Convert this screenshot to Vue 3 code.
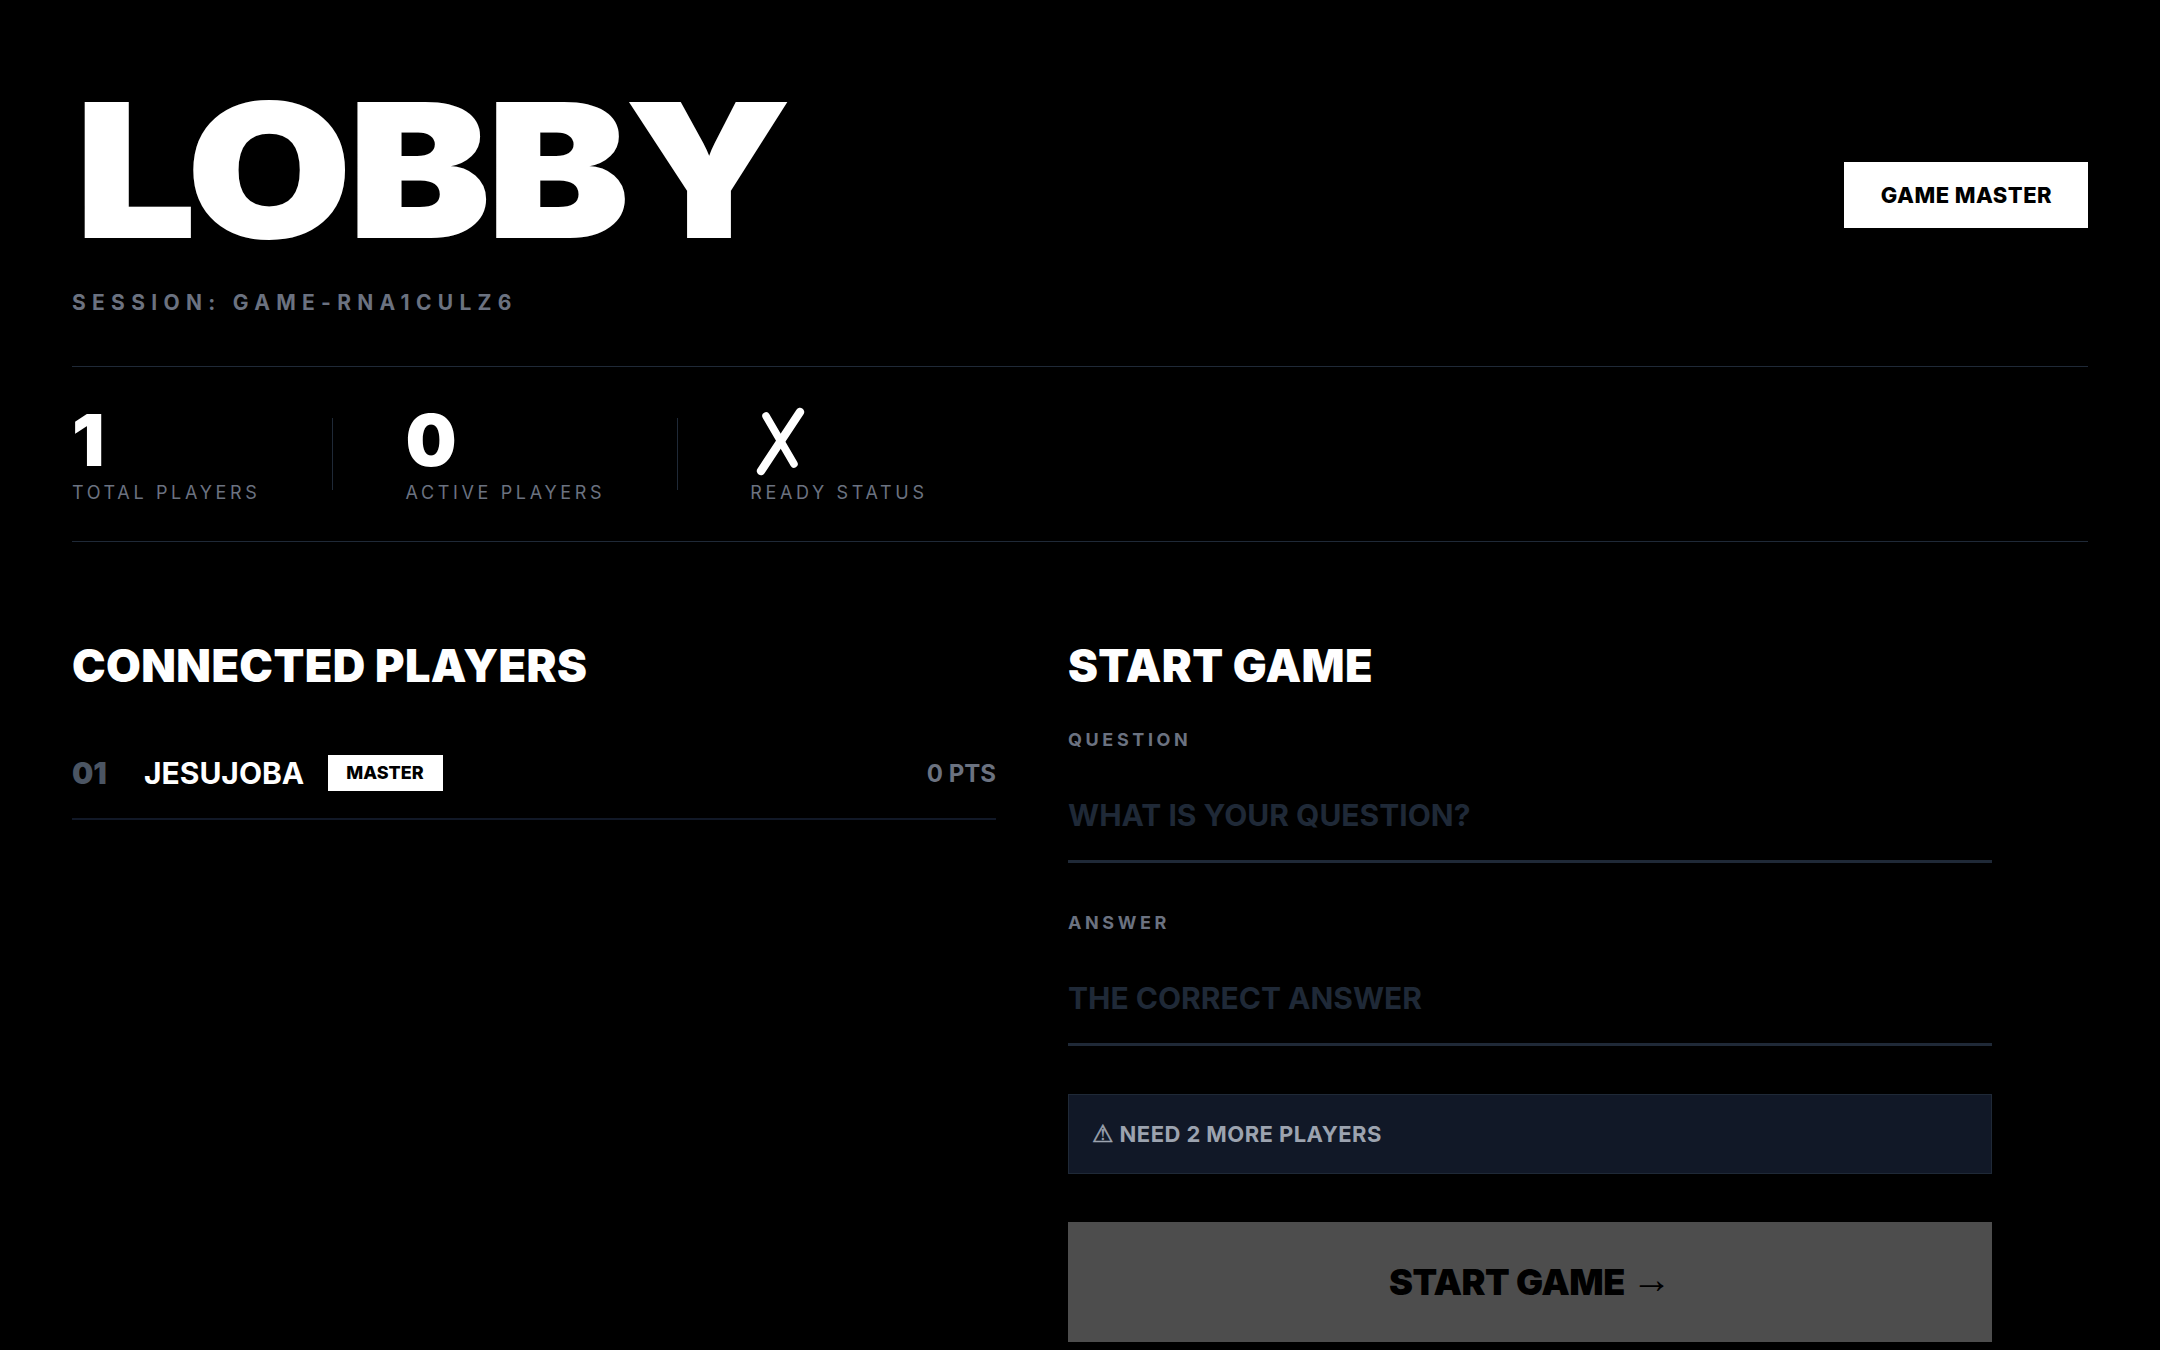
<script setup>
const stats = [
  { value: '1', label: 'TOTAL PLAYERS' },
  { value: '0', label: 'ACTIVE PLAYERS' },
  { icon: true, label: 'READY STATUS' },
]
const players = [{ id: 1, num: '01', name: 'JESUJOBA', master: true, pts: '0 PTS' }]
</script>

<template>
  <div class="page">
    <header class="header">
      <div>
        <h1 class="title">LOBBY</h1>
        <p class="session">SESSION: GAME-RNA1CULZ6</p>
      </div>
      <div class="role">GAME MASTER</div>
    </header>

    <section class="stats">
      <template v-for="(stat, index) in stats" :key="stat.label">
        <div v-if="index > 0" class="divider"></div>
        <div class="stat">
          <div class="stat__value">
            <svg v-if="stat.icon" class="cross" width="60" height="72" viewBox="0 0 60 72" aria-label="Not ready">
              <path d="M16 12 L44 60" fill="none" stroke="#fff" stroke-width="7.5" stroke-linecap="round" />
              <path d="M50 8 L11 67" fill="none" stroke="#fff" stroke-width="8.5" stroke-linecap="round" />
            </svg>
            <template v-else>{{ stat.value }}</template>
          </div>
          <div class="stat__label">{{ stat.label }}</div>
        </div>
      </template>
    </section>

    <main class="columns">
      <section>
        <h2 class="heading">CONNECTED PLAYERS</h2>
        <div class="player" v-for="player in players" :key="player.id">
          <span class="player__num">{{ player.num }}</span>
          <span class="player__name">{{ player.name }}</span>
          <span v-if="player.master" class="badge">MASTER</span>
          <span class="player__pts">{{ player.pts }}</span>
        </div>
      </section>

      <section>
        <h2 class="heading">START GAME</h2>
        <form class="form" @submit.prevent>
          <label class="field">
            <span class="field__label">QUESTION</span>
            <input class="field__input" type="text" placeholder="WHAT IS YOUR QUESTION?" />
          </label>
          <label class="field">
            <span class="field__label">ANSWER</span>
            <input class="field__input" type="text" placeholder="THE CORRECT ANSWER" />
          </label>
          <div class="alert"><span class="alert__icon">⚠</span> NEED 2 MORE PLAYERS</div>
          <button class="start" disabled>START GAME <span class="start__arrow">→</span></button>
        </form>
      </section>
    </main>
  </div>
</template>

<style>
html,
body {
  background: #000;
}
</style>

<style scoped>
.page {
  padding: 72px 72px 0;
  font-family: Inter, "Liberation Sans", sans-serif;
  color: #fff;
}

.header {
  display: flex;
  justify-content: space-between;
  align-items: center;
  padding-bottom: 49px;
  border-bottom: 1px solid #1f2937;
}

.title {
  margin: 0 0 0 4px;
  font-size: 184px;
  font-weight: 900;
  line-height: 196px;
  letter-spacing: -2px;
  -webkit-text-stroke: 2px #fff;
  transform: scaleX(1.148);
  transform-origin: left center;
}

.session {
  margin: 21px 0 0;
  font-size: 21px;
  font-weight: 700;
  line-height: 28px;
  letter-spacing: 0.3em;
  color: #6b7280;
}

.role {
  padding: 20px 36px 20px 37px;
  background: #fff;
  color: #000;
  font-size: 22px;
  font-weight: 800;
  line-height: 26px;
  letter-spacing: 0.02em;
}

.stats {
  display: flex;
  align-items: center;
  gap: 72px;
  height: 174px;
  border-bottom: 1px solid #1f2937;
}

.divider {
  width: 1px;
  height: 72px;
  background: #1f2937;
}

.stat__value {
  font-size: 72px;
  font-weight: 900;
  line-height: 72px;
  height: 72px;
}

.cross {
  display: block;
}

.stat__label {
  margin-top: 6px;
  font-size: 18px;
  line-height: 22px;
  letter-spacing: 3.65px;
  color: #6b7280;
}

.columns {
  display: grid;
  grid-template-columns: 924px 924px;
  gap: 72px;
  padding-top: 97px;
}

.heading {
  margin: 0;
  font-size: 45px;
  font-weight: 900;
  line-height: 54px;
  letter-spacing: 0.4px;
}

.player {
  display: flex;
  align-items: center;
  margin-top: 44px;
  height: 72px;
  padding-bottom: 9px;
  border-bottom: 2px solid #111827;
}

.player__num {
  width: 72px;
  font-size: 30px;
  font-weight: 900;
  color: #4b5563;
}

.player__name {
  font-size: 30px;
  font-weight: 700;
}

.badge {
  margin-left: 24px;
  padding: 0 19px 0 18px;
  background: #fff;
  color: #000;
  font-size: 18px;
  font-weight: 800;
  line-height: 36px;
}

.player__pts {
  margin-left: auto;
  font-size: 24px;
  font-weight: 700;
  color: #6b7280;
}

.form {
  display: flex;
  flex-direction: column;
  margin-top: 36px;
}

.field {
  display: block;
}

.field + .field {
  margin-top: 49px;
}

.field__label {
  display: block;
  font-size: 18px;
  font-weight: 700;
  line-height: 22px;
  letter-spacing: 0.2em;
  color: #6b7280;
}

.field__input {
  display: block;
  box-sizing: border-box;
  width: 100%;
  height: 112px;
  padding: 19px 0 0;
  background: transparent;
  border: none;
  border-bottom: 3px solid #1f2937;
  outline: none;
  color: #fff;
  font-family: inherit;
  font-size: 30px;
  font-weight: 700;
}

.field__input::placeholder {
  color: #1f2937;
  opacity: 1;
}

.alert {
  margin-top: 48px;
  padding: 0 23px;
  height: 80px;
  box-sizing: border-box;
  display: flex;
  align-items: center;
  white-space: pre;
  background: #111827;
  border: 1px solid #1f2937;
  color: #9ca3af;
  font-size: 22px;
  font-weight: 700;
  letter-spacing: 0.02em;
}

.alert__icon {
  font-family: "DejaVu Sans", sans-serif;
  font-size: 24px;
  font-weight: 700;
  -webkit-text-stroke: 0.5px #9ca3af;
}

.start {
  margin-top: 48px;
  height: 120px;
  padding-top: 0;
  border: none;
  background: #fff;
  opacity: 0.3;
  color: #000;
  font-family: inherit;
  font-size: 36px;
  font-weight: 900;
  letter-spacing: -0.5px;
}

.start__arrow {
  font-family: "Liberation Sans", sans-serif;
  font-size: 40px;
  font-weight: 400;
  line-height: 1;
  vertical-align: 2px;
}
</style>
